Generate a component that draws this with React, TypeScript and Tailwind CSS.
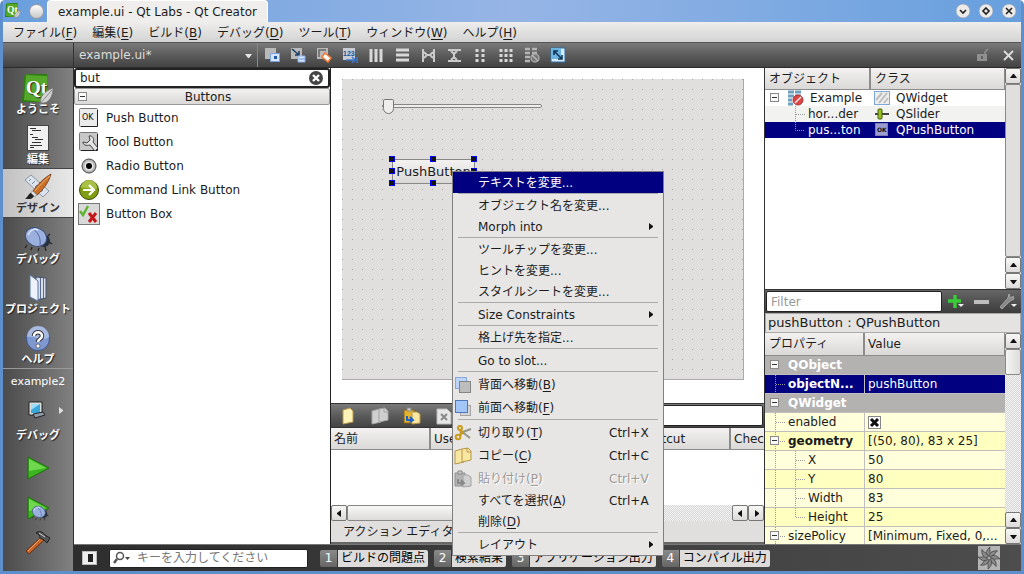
// Qt Creator のデザインモード画面。
// フォームエディタ上でプッシュボタンのコンテキストメニューを開いた状態を描画する。

import React from 'react';

const panelHeader = 'bg-linear-to-b from-[#f3f2f1] to-[#dad9d8]';
const darkBar = 'bg-linear-to-b from-[#7a7a7a] via-[#5c5c5c] to-[#434343]';

interface LabelProps {
  text: string;
  accel?: string;
}

const Label: React.FC<LabelProps> = ({ text, accel }) => (
  <span className="whitespace-nowrap">
    {text}
    {accel && (
      <>
        (<span className="underline underline-offset-2">{accel}</span>)
      </>
    )}
  </span>
);

// ---- アイコン ----

const QtLogo: React.FC<{ className: string }> = ({ className }) => (
  <svg viewBox="0 0 32 32" className={className} aria-hidden="true">
    <path d="M2 3L4 0H25V23L20 28H0Z" fill="#2d7d10" />
    <path d="M4 1L25 2V23L20 28L2 26Z" fill="#55a82a" />
    <text x="4" y="20" fontSize="19" fontWeight="bold" fontFamily="Liberation Serif" fill="#fff">Qt</text>
    <path d="M31 14C23 17 17 23 19 29C27 30 31 22 31 14Z" fill="#d4d4d4" stroke="#777" strokeWidth="0.8" />
    <path d="M30 16L17 31" stroke="#888" fill="none" />
  </svg>
);

const EditIcon = () => (
  <svg viewBox="0 0 32 28" className="h-7 w-8" aria-hidden="true">
    <rect x="5.5" y="1.5" width="21" height="25" fill="#f1f1f1" stroke="#444" />
    <path d="M8 4.5h6M10 6.5h9M8 10.5h3M10 13.5h6M13 15.5h8M10 18.5h9M8 21.5h12M8 23.5h4" stroke="#333" />
  </svg>
);

const DesignIcon = () => (
  <svg viewBox="0 0 32 28" className="h-7 w-8" aria-hidden="true">
    <path d="M3 7L9 2L27 18L21 24Z" fill="#dce3ec" stroke="#8a96a8" />
    <path d="M7 8l2-2M10 11l3-3M13 14l2-2M16 16l3-3M19 19l2-2" stroke="#7a8aa0" />
    <path d="M29 1C22 5 15 12 11 18L15 22C21 17 27 9 29 1Z" fill="#c8702a" stroke="#70340c" strokeWidth="0.8" />
    <path d="M28 3C22 8 17 13 13 18" stroke="#f0b070" fill="none" />
    <path d="M11 18L15 22L12 24L8 20Z" fill="#ddd" stroke="#777" strokeWidth="0.6" />
    <path d="M9 20L12 23C10 27 7 26 3 26C6 24 6 21 9 20Z" fill="#222" />
  </svg>
);

const BugIcon: React.FC<{ className?: string }> = ({ className = 'h-7 w-8' }) => (
  <svg viewBox="0 0 32 28" className={className} aria-hidden="true">
    <path d="M5 21l-2 3M10 23l-1 3M17 24l-1 3M23 23l1 4M27 18l3 2M25 13l3-3" stroke="#222" strokeWidth="1.2" />
    <circle cx="22" cy="17" r="6" fill="#27303c" />
    <ellipse cx="14" cy="13" rx="11" ry="9" transform="rotate(25 14 13)" fill="#9bb0de" stroke="#3d4f7b" />
    <path d="M10 4C16 8 19 14 18 21" stroke="#5067a0" fill="none" />
    <path d="M6 11C8 6 12 4 16 6" stroke="#dce6fb" strokeWidth="1.6" fill="none" />
  </svg>
);

const ProjectIcon = () => (
  <svg viewBox="0 0 32 28" className="h-7 w-8" aria-hidden="true">
    <path d="M14 3L24 4V24L14 26Z" fill="#d8dde6" stroke="#42526c" />
    <path d="M18.5 4v21M21.5 4v20" stroke="#5c6d8c" />
    <path d="M8 1L16 7V27L8 23Z" fill="#eef3fb" stroke="#5b79ab" />
  </svg>
);

const HelpIcon = () => (
  <svg viewBox="0 0 32 28" className="h-7 w-8" aria-hidden="true">
    <circle cx="16" cy="15" r="11.5" fill="#7f98cf" stroke="#3c5692" />
    <path d="M5 13A11 11 0 0 1 27 13C20 18 12 11 5 13Z" fill="#a8bae2" />
    <path d="M12 12C12 7 20 7 20 12C20 15 16 15 16 18" fill="none" stroke="#333" strokeWidth="4.5" />
    <path d="M12 12C12 7 20 7 20 12C20 15 16 15 16 18" fill="none" stroke="#fff" strokeWidth="2.6" />
    <circle cx="16" cy="22" r="2" fill="#fff" stroke="#333" strokeWidth="0.6" />
  </svg>
);

const ComputerIcon = () => (
  <svg viewBox="0 0 18 18" className="h-[18px] w-[18px]" aria-hidden="true">
    <path d="M1 1H14V14H1Z" fill="#ddd" stroke="#222" />
    <path d="M3 3H12V12H3Z" fill="#39a7dc" />
    <path d="M3 3H12L3 9Z" fill="#9fdcf7" />
    <path d="M5 13L15 11L17 14L7 17Z" fill="#8d9ca5" stroke="#222" />
  </svg>
);

const RunIcon = () => (
  <svg viewBox="0 0 24 24" className="h-6 w-6" aria-hidden="true">
    <path d="M2 1L23 12L2 23Z" fill="#3cb521" stroke="#1f6f10" />
    <path d="M3 3L20 12L3 15Z" fill="#6fd84e" />
  </svg>
);

const HammerIcon = () => (
  <svg viewBox="0 0 26 26" className="h-[26px] w-[26px]" aria-hidden="true">
    <path d="M16 8L19 11L4 25L1 22Z" fill="#c9662b" stroke="#6b2f0d" />
    <path d="M16 9L3 22" stroke="#f0a26b" />
    <path d="M11 4C14 1 18 3 20 6L25 9L22 14L19 11L15 9C15 6 14 5 11 4Z" fill="#555" stroke="#222" />
    <path d="M14 4L20 8" stroke="#ccc" />
  </svg>
);

const Triangle: React.FC<{ dir: 'up' | 'down' | 'left' | 'right'; className?: string }> = ({ dir, className = 'text-[#111]' }) => {
  const d = {
    up: 'M1 6L4 2H5L8 6Z',
    down: 'M1 3L4 7H5L8 3Z',
    left: 'M6 1L2 4V5L6 8Z',
    right: 'M3 1L7 4V5L3 8Z',
  }[dir];
  return (
    <svg viewBox="0 0 9 9" className={`h-[9px] w-[9px] shrink-0 ${className}`} aria-hidden="true">
      <path d={d} fill="currentColor" />
    </svg>
  );
};

const FileIcon: React.FC<{ kind: 'new' | 'copy' | 'paste' | 'delete'; disabled?: boolean }> = ({ kind, disabled }) => {
  const fill = disabled ? '#cfcfcf' : '#f8e7a0';
  const edge = disabled ? '#a4a4a4' : '#b8964a';
  return (
    <svg viewBox="0 0 18 18" className="h-[18px] w-[18px] shrink-0" aria-hidden="true">
      {kind === 'new' && <path d="M4 3L11 1L14 4V15L4 17Z" fill="#fdf3b8" stroke={edge} />}
      {kind === 'copy' && (
        <>
          <path d="M1 4L8 2L10 4V15L1 17Z" fill={fill} stroke={edge} />
          <path d="M8 2L14 1L17 4V13L8 15Z" fill={fill} stroke={edge} />
          <path d="M13 1V5H17" fill="none" stroke={edge} />
        </>
      )}
      {kind === 'paste' && (
        <>
          <path d="M1 3H11V16H1Z" fill={disabled ? '#b4b4b4' : '#e3b52e'} stroke={disabled ? '#909090' : '#8a6410'} />
          <path d="M4 1H8V4H4Z" fill="#ccc" stroke="#888" />
          <path d="M9 5H14L17 7V16L9 17Z" fill={fill} stroke={edge} />
          <path d="M4 9V13H9M7 10L10 13L7 15" fill="none" stroke={disabled ? '#888' : '#1e62c8'} strokeWidth="2" />
        </>
      )}
      {kind === 'delete' && (
        <>
          <path d="M2 2H12L16 6V17H2Z" fill="#e6e6e6" stroke="#bbb" />
          <path d="M6 7L12 13M12 7L6 13" stroke="#888" strokeWidth="2" />
        </>
      )}
    </svg>
  );
};

const StackIcon: React.FC<{ front: 'gray' | 'blue' }> = ({ front }) => (
  <svg viewBox="0 0 18 18" className="h-[18px] w-[18px]" aria-hidden="true">
    {front === 'gray' ? (
      <>
        <rect x="1.5" y="1.5" width="11" height="11" fill="#bcd4f8" stroke="#88a8d8" />
        <rect x="5.5" y="5.5" width="11" height="11" fill="#bdbdbd" stroke="#858585" />
      </>
    ) : (
      <>
        <rect x="6.5" y="6.5" width="10" height="10" fill="#d4d4d4" stroke="#a4a4a4" />
        <rect x="1.5" y="1.5" width="12" height="12" fill="#a3c6f8" stroke="#4f78bc" />
      </>
    )}
  </svg>
);

const CutIcon = () => (
  <svg viewBox="0 0 18 18" className="h-[18px] w-[18px]" aria-hidden="true">
    <path d="M6 9L17 5M7 7L16 14" stroke="#959588" strokeWidth="2" />
    <circle cx="6" cy="4" r="2" fill="none" stroke="#c99a1c" strokeWidth="2" />
    <circle cx="4" cy="13" r="2.3" fill="none" stroke="#c99a1c" strokeWidth="2" />
    <path d="M6 6L9 9M6 11L9 8" stroke="#c99a1c" strokeWidth="2.5" />
  </svg>
);

// フォームエディタのツールバー(編集モード切替とレイアウト)
const formTools: { name: string; icon: React.ReactNode }[] = [
  {
    name: 'ウィジェットを編集',
    icon: (
      <>
        <path d="M1 1H12V12H1Z" fill="#b9b9b9" />
        <path d="M6.500 6.500H15.500V14.500H6.500Z" fill="#d4e5ff" stroke="#7ca2dc" />
        <path d="M10 9H13V12H10Z" fill="#2359ab" />
      </>
    ),
  },
  {
    name: 'シグナル/スロットを編集',
    icon: (
      <>
        <path d="M1 1H12V12H1Z" fill="#b9b9b9" />
        <path d="M2 2L9 8M9 4V8H5" stroke="#173a61" strokeWidth="1.5" fill="none" />
        <path d="M8 9H15V15H8Z" fill="#d4e5ff" stroke="#8bafe2" />
        <path d="M9 12H15" stroke="#6b95d0" />
      </>
    ),
  },
  {
    name: 'buddy を編集',
    icon: (
      <>
        <path d="M1 1H12V12H1Z" fill="#b9b9b9" />
        <path d="M3 10V3H10" stroke="#666" strokeWidth="1.5" fill="none" />
        <path d="M9 6L15 11L12 15L6 10Z" fill="#fff" stroke="#ee7a3c" strokeWidth="1.6" />
      </>
    ),
  },
  {
    name: 'タブ順序を編集',
    icon: (
      <>
        <path d="M1 1H13V13H1Z" fill="#c7ccd4" />
        <text x="1" y="9" fontSize="7" fontWeight="bold" fontFamily="Liberation Sans" fill="#244f94">123</text>
        <path d="M4 13H13M10 10L13 13L10 16M15 10V16" stroke="#3f78cf" strokeWidth="1.5" fill="none" />
      </>
    ),
  },
  { name: '水平に並べる', icon: <path d="M3 2V15M8 2V15M13 2V15" stroke="#d8d8d8" strokeWidth="3" /> },
  { name: '垂直に並べる', icon: <path d="M2 3H15M2 8H15M2 13H15" stroke="#d8d8d8" strokeWidth="3" /> },
  {
    name: '水平スプリッタ',
    icon: <path d="M3 2V15M14 2V15M4 5L7 8L4 11M13 5L10 8L13 11M7 8H10" stroke="#c9c9c9" strokeWidth="2" fill="none" />,
  },
  {
    name: '垂直スプリッタ',
    icon: <path d="M2 3H15M2 14H15M5 4L8 7L11 4M5 13L8 10L11 13M8 7V10" stroke="#c9c9c9" strokeWidth="2" fill="none" />,
  },
  { name: 'フォームレイアウト', icon: <path d="M5 2V15M11 2V15" stroke="#d8d8d8" strokeWidth="3" strokeDasharray="3 2" /> },
  {
    name: 'グリッドに並べる',
    icon: <path d="M3 2V15M8 2V15M13 2V15" stroke="#d8d8d8" strokeWidth="3" strokeDasharray="3 2" />,
  },
  {
    name: 'レイアウトを解除',
    icon: (
      <>
        <path d="M1 2H6M8 2H13M1 6H6M8 6H13M1 10H6M1 14H6" stroke="#b5b5b5" strokeWidth="2.5" />
        <circle cx="11" cy="11" r="4" fill="#777" stroke="#a5a5a5" strokeWidth="1.5" />
        <path d="M8 8L14 14" stroke="#b5b5b5" strokeWidth="1.5" />
      </>
    ),
  },
  {
    name: 'サイズを調整',
    icon: (
      <>
        <path d="M1 1H15V15H1Z" fill="#d6ecfa" stroke="#2c6ca5" />
        <path d="M1 1H11V12H1Z" fill="#6bb4df" />
        <path d="M4 4L12 12M4 8V4H8M12 8V12H8" stroke="#0f3557" strokeWidth="1.6" fill="none" />
      </>
    ),
  },
];

// ---- ウィンドウ上部 ----

const TitleBar = () => (
  <header className="flex h-[22px] shrink-0 items-center bg-linear-to-r from-[#6a9fdd] via-[#96b5e6] to-[#679fde] pl-[2px]">
    <QtLogo className="h-4 w-4" />
    <button aria-label="最前面に固定" className="ml-2 h-[15px] w-[15px] rounded-full border border-[#9a9a9a] bg-linear-to-b from-[#fdfdfd] to-[#c9c9c9]" />
    <h1 className="ml-[3px] flex h-full items-center self-end rounded-t-[4px] border-x border-t border-white bg-[#efeeed] px-[10px] pt-px">
      example.ui - Qt Labs - Qt Creator
    </h1>
    <div className="ml-auto flex gap-2 pr-1">
      {[
        { name: '最小化', d: 'M4 6L7 9L10 6' },
        { name: '最大化', d: 'M7 4L10 7L7 10L4 7Z' },
        { name: '閉じる', d: 'M4 4L10 10M10 4L4 10' },
      ].map((b) => (
        <button key={b.name} aria-label={b.name}>
          <svg viewBox="0 0 15 15" className="h-[15px] w-[15px]">
            <circle cx="7" cy="7" r="7" fill="#ecebea" stroke="#8b96a6" strokeWidth="0.6" />
            <path d={b.d} fill="none" stroke="#222" strokeWidth="1.6" />
          </svg>
        </button>
      ))}
    </div>
  </header>
);

const menus: [string, string][] = [
  ['ファイル', 'F'],
  ['編集', 'E'],
  ['ビルド', 'B'],
  ['デバッグ', 'D'],
  ['ツール', 'T'],
  ['ウィンドウ', 'W'],
  ['ヘルプ', 'H'],
];

const MenuBar = () => (
  <nav className="flex h-[21px] shrink-0 items-center gap-[15px] border-b border-[#555] bg-linear-to-b from-[#efeeed] to-[#d3d3d3] pt-px pl-[10px]">
    {menus.map(([text, accel]) => (
      <button key={text}>
        <Label text={text} accel={accel} />
      </button>
    ))}
  </nav>
);

const FormToolBar = () => (
  <div className={`flex h-[25px] shrink-0 items-center border-b border-[#2c2c2c] ${darkBar}`}>
    <div className="h-full w-[71px] border-r border-[#333]" />
    <div className="relative flex h-full w-[184px] items-center border-r border-[#888]">
      <select aria-label="開いているファイル" className="h-full w-full appearance-none bg-transparent pl-[5px] text-[#dcdcdc]">
        <option>example.ui*</option>
      </select>
      <Triangle dir="down" className="pointer-events-none absolute right-1 text-[#e6e6e6]" />
    </div>
    <div className="flex items-center gap-[10px] pl-[6px]">
      {formTools.map((t) => (
        <button key={t.name} aria-label={t.name}>
          <svg viewBox="0 0 16 16" className="h-4 w-4">{t.icon}</svg>
        </button>
      ))}
    </div>
    <div className="ml-auto flex items-center gap-[13px] pr-[7px]">
      <svg viewBox="0 0 13 14" className="h-[14px] w-[13px]" aria-hidden="true">
        <path d="M1 6H11V13H1Z" fill="#909090" />
        <path d="M9 6V4L12 1" stroke="#909090" strokeWidth="1.5" fill="none" />
        <path d="M6 8V11" stroke="#555" strokeWidth="1.5" />
      </svg>
      <button aria-label="エディタを閉じる">
        <svg viewBox="0 0 12 12" className="h-3 w-3">
          <path d="M2 2L11 11M11 2L2 11" stroke="#dedede" strokeWidth="1.8" />
        </svg>
      </button>
    </div>
  </div>
);

// ---- モード選択 ----

const modes = [
  { name: 'ようこそ', icon: <QtLogo className="-mb-1 h-8 w-8 shrink-0" /> },
  { name: '編集', icon: <EditIcon /> },
  { name: 'デザイン', icon: <DesignIcon />, active: true },
  { name: 'デバッグ', icon: <BugIcon /> },
  { name: 'プロジェクト', icon: <ProjectIcon /> },
  { name: 'ヘルプ', icon: <HelpIcon /> },
];

const ModeBar = () => (
  <aside className="flex w-[71px] shrink-0 flex-col border-r border-[#2f2f2f] bg-linear-to-r from-[#4b4b4b] to-[#818181]">
    {modes.map((m) => (
      <button
        key={m.name}
        className={`flex h-[50px] shrink-0 flex-col items-center justify-end text-[11px] leading-[16px] font-bold ${
          m.active
            ? 'border-y border-[#444] bg-linear-to-r from-[#c0c0c0] to-[#e9e9e9] text-[#333]'
            : 'text-white [text-shadow:1px_1px_1px_#222]'
        }`}
      >
        {m.icon}
        <span className="whitespace-nowrap">{m.name}</span>
      </button>
    ))}
    <div className="flex flex-1 flex-col items-center border-t border-[#999] pt-[5px] text-[11px] leading-[16px] text-white">
      <span>example2</span>
      <button aria-label="キットを選択" className="mt-[11px] flex items-center gap-[10px] pl-[17px]">
        <ComputerIcon />
        <Triangle dir="right" className="text-[#e0e0e0]" />
      </button>
      <span className="mt-[9px] font-bold [text-shadow:1px_1px_1px_#222]">デバッグ</span>
      <button aria-label="実行" className="mt-3">
        <RunIcon />
      </button>
      <button aria-label="デバッグ開始" className="relative mt-4">
        <RunIcon />
        <BugIcon className="absolute top-2 left-1 h-[17px] w-5" />
      </button>
      <button aria-label="ビルド" className="mt-[9px]">
        <HammerIcon />
      </button>
    </div>
  </aside>
);

// ---- ウィジェットボックス ----

const widgets: { name: string; icon: React.ReactNode }[] = [
  {
    name: 'Push Button',
    icon: (
      <>
        <rect x="1.5" y="1.5" width="18" height="18" rx="1" fill="#ebebeb" stroke="#777" />
        <path d="M19.500 3V19.500H3" fill="none" stroke="#222" />
        <text x="4" y="13" fontSize="8" fontFamily="DejaVu Sans" fill="#111">OK</text>
      </>
    ),
  },
  {
    name: 'Tool Button',
    icon: (
      <>
        <rect x="1.5" y="1.5" width="18" height="18" rx="1" fill="#c8c8c8" stroke="#777" />
        <path d="M19.500 3V19.500H3" fill="none" stroke="#222" />
        <path d="M11 5C14 4 17 8 15 11L20 17L17 20L12 14C8 15 5 14 5 11L9 12L12 9Z" fill="#e4e4e4" stroke="#444" />
      </>
    ),
  },
  {
    name: 'Radio Button',
    icon: (
      <>
        <circle cx="11" cy="11" r="7" fill="#b9b9b9" stroke="#444" />
        <circle cx="11" cy="11" r="4.5" fill="#e8e8e8" />
        <circle cx="11" cy="11" r="3" fill="#000" />
      </>
    ),
  },
  {
    name: 'Command Link Button',
    icon: (
      <>
        <circle cx="11" cy="11" r="9.5" fill="#809c10" stroke="#3f4a10" />
        <path d="M3 9A8 8 0 0 1 19 9C14 12 8 8 3 9Z" fill="#a8c044" />
        <path d="M5 11H15M11 6L16 11L11 16" fill="none" stroke="#fff" strokeWidth="2.2" />
      </>
    ),
  },
  {
    name: 'Button Box',
    icon: (
      <>
        <rect x="0.5" y="0.5" width="21" height="21" fill="#d9d9d9" stroke="#777" />
        <path d="M2 8L5 12L10 3" fill="none" stroke="#5cb52c" strokeWidth="2.4" />
        <path d="M11 10L18 19M18 10L11 19" stroke="#c41818" strokeWidth="3" />
      </>
    ),
  },
];

const WidgetBox = () => (
  <section className="flex w-[257px] shrink-0 flex-col border-r border-[#222] bg-white">
    <div className="relative flex h-5 shrink-0 items-center rounded-[3px] border-2 border-[#222] bg-white">
      <input aria-label="ウィジェットを検索" defaultValue="but" className="w-full bg-transparent pl-1 outline-none" />
      <button aria-label="検索文字列を消去" className="absolute right-1">
        <svg viewBox="0 0 15 15" className="h-[15px] w-[15px]">
          <circle cx="7" cy="7" r="7" fill="#444" />
          <path d="M4 4L10 10M10 4L4 10" stroke="#fff" strokeWidth="2.4" />
        </svg>
      </button>
    </div>
    <button className={`relative flex h-[17px] shrink-0 items-center justify-center rounded-[2px] border border-[#999] pl-3 ${panelHeader}`}>
      <span className="absolute left-[3px] flex h-[9px] w-[9px] items-center justify-center border border-[#888] bg-white">
        <span className="h-px w-[5px] bg-[#333]" />
      </span>
      Buttons
    </button>
    <ul className="pt-px">
      {widgets.map((w) => (
        <li key={w.name} className="flex h-6 items-center gap-[6px] pl-1">
          <svg viewBox="0 0 22 22" className="h-[22px] w-[22px] shrink-0" aria-hidden="true">{w.icon}</svg>
          {w.name}
        </li>
      ))}
    </ul>
  </section>
);

// ---- スクロールバー ----

const arrowButton = 'flex h-4 w-4 shrink-0 items-center justify-center rounded-[2px] border border-[#777] bg-linear-to-b from-[#f7f7f6] to-[#dcdbda]';
const hatch = 'bg-[repeating-conic-gradient(#d6d6d6_0_25%,#f4f4f4_0_50%)] bg-size-[2px_2px]';

const VScroll: React.FC<{ thumb: string }> = ({ thumb }) => (
  <div className={`flex w-4 shrink-0 flex-col ${hatch}`}>
    <button aria-label="上へ" className={arrowButton}><Triangle dir="up" /></button>
    <div className={`rounded-[2px] border border-[#888] ${thumb}`} />
    <button aria-label="上へ" className={`mt-auto ${arrowButton}`}><Triangle dir="up" /></button>
    <button aria-label="下へ" className={arrowButton}><Triangle dir="down" /></button>
  </div>
);

// ---- フォームエディタ ----

const handles = [
  '-left-[3px] -top-[3px]',
  'left-[38px] -top-[3px]',
  '-right-[2px] -top-[3px]',
  '-left-[3px] top-[9px]',
  '-right-[2px] top-[9px]',
  '-left-[3px] -bottom-[2px]',
  'left-[38px] -bottom-[2px]',
  '-right-[2px] -bottom-[2px]',
];

const FormCanvas = () => (
  <div className="min-h-0 flex-1 overflow-hidden bg-white p-[11px]">
    <div className="relative h-[301px] w-[402px] border-r border-b border-[#aaa] bg-[#e0dfde] bg-[linear-gradient(90deg,#e0dfde_9px,transparent_9px),linear-gradient(#e0dfde_9px,#a5a5a5_9px)] bg-size-[10px_10px] bg-position-[1px_1px]">
      <input
        type="range"
        aria-label="horizontalSlider"
        defaultValue={0}
        className="absolute top-[19px] left-10 h-4 w-40 appearance-none bg-transparent [&::-webkit-slider-runnable-track]:h-1 [&::-webkit-slider-runnable-track]:rounded-full [&::-webkit-slider-runnable-track]:border [&::-webkit-slider-runnable-track]:border-[#858585] [&::-webkit-slider-runnable-track]:bg-[#efeeed] [&::-webkit-slider-thumb]:-mt-[6px] [&::-webkit-slider-thumb]:h-[15px] [&::-webkit-slider-thumb]:w-[11px] [&::-webkit-slider-thumb]:appearance-none [&::-webkit-slider-thumb]:rounded-t-[2px] [&::-webkit-slider-thumb]:rounded-b-[6px] [&::-webkit-slider-thumb]:border [&::-webkit-slider-thumb]:border-[#777] [&::-webkit-slider-thumb]:bg-[#eeedec]"
      />
      <div className="absolute top-20 left-[50px] h-[25px] w-[83px]">
        <button className={`h-full w-full border border-[#888] text-[13px] whitespace-nowrap ${panelHeader}`}>PushButton</button>
        {handles.map((pos) => (
          <span key={pos} className={`absolute h-[6px] w-[6px] border border-[#0000f0] bg-[#111] ${pos}`} />
        ))}
      </div>
    </div>
  </div>
);

const actionColumns = ['名前', 'Used', 'テキスト', 'Shortcut', 'Checkable'];

const ActionEditor = () => (
  <section className="flex shrink-0 flex-col bg-[#e0dfde]">
    <div className={`flex h-[25px] items-center gap-[14px] border-y border-[#333] pr-px pl-2 ${darkBar}`}>
      <button aria-label="新規"><FileIcon kind="new" /></button>
      <button aria-label="コピー"><FileIcon kind="copy" disabled /></button>
      <button aria-label="貼り付け"><FileIcon kind="paste" /></button>
      <button aria-label="削除"><FileIcon kind="delete" /></button>
      <input aria-label="アクションを絞り込む" className="ml-6 h-[21px] min-w-0 flex-1 rounded-[2px] border border-[#222] bg-white px-1" />
    </div>
    <div className="h-[77px] overflow-hidden bg-white">
      <table className="w-[500px] table-fixed border-separate border-spacing-0">
        <thead>
          <tr>
            {actionColumns.map((c) => (
              <th key={c} className={`h-[22px] w-[100px] border-r-2 border-b border-[#8c8c8c] p-0 pl-[3px] text-left font-normal ${panelHeader}`}>
                <Label text={c} />
              </th>
            ))}
          </tr>
        </thead>
      </table>
    </div>
    <div className={`flex h-4 ${hatch}`}>
      <button aria-label="左へ" className={arrowButton}><Triangle dir="left" /></button>
      <div className="w-[310px] rounded-[2px] border border-[#888] bg-linear-to-b from-[#f8f8f7] to-[#dcdbda]" />
      <button aria-label="左へ" className={`ml-auto ${arrowButton}`}><Triangle dir="left" /></button>
      <button aria-label="右へ" className={arrowButton}><Triangle dir="right" /></button>
    </div>
    <button className="flex h-[23px] items-center border-b-2 border-[#666] pt-px pl-3 text-left">
      <Label text="アクション エディタ" />
    </button>
  </section>
);

// ---- 右側のドック ----

type Branch = 'root' | 'leaf' | 'open' | 'sub' | 'subLast';

/** ツリーの点線と開閉ボックス */
const TreeLines: React.FC<{ kind: Branch }> = ({ kind }) => {
  const dots = { stroke: '#999', strokeDasharray: '1 1' };
  const nested = kind === 'sub' || kind === 'subLast';
  return (
    <svg viewBox="0 0 42 18" className={`h-[18px] shrink-0 ${nested ? 'w-[42px]' : 'w-[42px] -mr-5'}`} aria-hidden="true">
      {kind !== 'root' && <path d="M10.500 0V18" {...dots} />}
      {kind === 'leaf' && <path d="M11 9.500H20" {...dots} />}
      {nested && <path d={kind === 'sub' ? 'M30.500 0V18M31 9.500H40' : 'M30.500 0V9.500H40'} fill="none" {...dots} />}
      {(kind === 'open' || kind === 'root') && (
        <>
          {kind === 'open' && <path d="M15 9.500H20" {...dots} />}
          <rect x="5.5" y="4.5" width="8" height="8" fill="#f8f8f8" stroke="#888" />
          <path d="M7 8.500H12" stroke="#333" />
        </>
      )}
    </svg>
  );
};

const ExampleIcon = () => (
  <svg viewBox="0 0 17 16" className="h-4 w-[17px] shrink-0" aria-hidden="true">
    <path d="M1 2H7M8 2H14M1 6H7M8 6H14M1 10H5M1 14H6" stroke="#6f9fbe" strokeWidth="3" />
    <circle cx="11" cy="10" r="5" fill="#d44" stroke="#a33" />
    <path d="M8 13L14 7" stroke="#eee" strokeWidth="1.5" />
  </svg>
);

const objects = [
  {
    name: 'Example',
    cls: 'QWidget',
    icon: (
      <>
        <rect x="0.5" y="1.5" width="15" height="13" fill="#eee" stroke="#7da7d9" />
        <path d="M2 10L8 3M5 13L13 3M10 13L14 8" stroke="#bdbdbd" strokeWidth="2" />
      </>
    ),
  },
  {
    name: 'hor...der',
    cls: 'QSlider',
    icon: (
      <>
        <path d="M1 8H15" stroke="#444" strokeWidth="2" />
        <rect x="4" y="3" width="4" height="10" rx="1" fill="#96c31f" stroke="#455d0b" />
      </>
    ),
  },
  {
    name: 'pus...ton',
    cls: 'QPushButton',
    icon: (
      <>
        <rect x="1.5" y="1.5" width="12" height="12" fill="#9c9cd0" stroke="#7d7db8" />
        <text x="3" y="10" fontSize="6" fontWeight="bold" fontFamily="DejaVu Sans" fill="#112">OK</text>
      </>
    ),
  },
];

const ObjectInspector = () => (
  <section className="flex min-h-0 flex-1 border-b border-[#333] bg-white">
    <div className="min-w-0 flex-1">
      <table className="w-full table-fixed border-separate border-spacing-0">
        <thead>
          <tr>
            <th className={`h-[22px] w-[106px] border-r-2 border-b border-[#8c8c8c] p-0 pl-1 text-left font-normal ${panelHeader}`}>
              <Label text="オブジェクト" />
            </th>
            <th className={`border-r border-b border-[#8c8c8c] p-0 pl-1 text-left font-normal ${panelHeader}`}>
              <Label text="クラス" />
            </th>
          </tr>
        </thead>
        <tbody>
          {objects.map((o, i) => (
            <tr key={o.name} className={i === 2 ? 'bg-[#000080] text-white' : i === 1 ? 'bg-[#f2f2f0]' : ''}>
              <td className="p-0">
                <div className="flex h-4 items-center overflow-hidden">
                  {i === 0 ? (
                    <>
                      <TreeLines kind="root" />
                      <ExampleIcon />
                      <span className="ml-[6px]">{o.name}</span>
                    </>
                  ) : (
                    <>
                      <svg viewBox="0 0 43 16" className="h-4 w-[43px] shrink-0" aria-hidden="true">
                        <path d={i === 1 ? 'M30.500 0V16M31 8.500H40' : 'M30.500 0V8.500H40'} fill="none" stroke="#999" strokeDasharray="1 1" />
                      </svg>
                      {o.name}
                    </>
                  )}
                </div>
              </td>
              <td className="p-0">
                <div className="flex h-4 items-center gap-[6px] pl-[3px]">
                  <svg viewBox="0 0 16 16" className="h-4 w-4 shrink-0" aria-hidden="true">{o.icon}</svg>
                  {o.cls}
                </div>
              </td>
            </tr>
          ))}
        </tbody>
      </table>
    </div>
    <VScroll thumb="flex-1 bg-[#e0dfde]" />
  </section>
);

interface Property {
  name: string;
  value?: React.ReactNode;
  kind: Branch;
  tone: string;
}

const properties: Property[] = [
  { name: 'QObject', kind: 'root', tone: 'bg-[#b3b2b1] font-bold text-white' },
  { name: 'objectN...', value: 'pushButton', kind: 'leaf', tone: 'bg-[#000080] text-white' },
  { name: 'QWidget', kind: 'root', tone: 'bg-[#b3b2b1] font-bold text-white' },
  {
    name: 'enabled',
    value: (
      <span className="relative flex h-[13px] w-[13px]">
        <input
          type="checkbox"
          id="prop-enabled"
          defaultChecked
          className="peer h-[13px] w-[13px] appearance-none border border-[#888] bg-white"
        />
        <svg viewBox="0 0 13 13" className="pointer-events-none absolute inset-0 hidden h-[13px] w-[13px] peer-checked:block">
          <path d="M3 3L10 10M10 3L3 10" stroke="#111" strokeWidth="3" />
        </svg>
      </span>
    ),
    kind: 'leaf',
    tone: 'bg-[#ffffdc]',
  },
  { name: 'geometry', value: '[(50, 80), 83 x 25]', kind: 'open', tone: 'bg-[#ffffbf]' },
  { name: 'X', value: '50', kind: 'sub', tone: 'bg-[#ffffdc]' },
  { name: 'Y', value: '80', kind: 'sub', tone: 'bg-[#ffffbf]' },
  { name: 'Width', value: '83', kind: 'sub', tone: 'bg-[#ffffdc]' },
  { name: 'Height', value: '25', kind: 'subLast', tone: 'bg-[#ffffbf]' },
  { name: 'sizePolicy', value: '[Minimum, Fixed, 0,...', kind: 'open', tone: 'bg-[#ffffdc]' },
];

const PropertyEditor = () => (
  <section className="flex shrink-0 flex-col">
    <div className="flex h-[23px] items-center bg-linear-to-b from-[#666] to-[#3c3c3c] pr-1 pl-px">
      <input
        aria-label="プロパティを絞り込む"
        placeholder="Filter"
        className="h-[21px] w-[176px] rounded-[2px] border border-[#222] bg-white pl-1 placeholder:text-[#999]"
      />
      <div className="ml-auto flex items-center gap-[9px]">
        <button aria-label="動的プロパティを追加">
          <svg viewBox="0 0 18 18" className="h-[18px] w-[18px]">
            <path d="M1 8H14M8 2V15" stroke="#38cc38" strokeWidth="3.4" />
            <path d="M11 11H17L14 14Z" fill="#eee" />
          </svg>
        </button>
        <button aria-label="動的プロパティを削除">
          <svg viewBox="0 0 16 18" className="h-[18px] w-4">
            <path d="M0 9H15" stroke="#bdbdbd" strokeWidth="4" />
          </svg>
        </button>
        <button aria-label="表示設定">
          <svg viewBox="0 0 18 18" className="h-[18px] w-[18px]">
            <path d="M10 1L9 5L1 14L3 16L11 8L15 6L14 3L12 5L11 4Z" fill="#888" stroke="#b4b4b4" strokeWidth="0.8" />
            <path d="M12 11H18L15 14Z" fill="#eee" />
          </svg>
        </button>
      </div>
    </div>
    <p className="flex h-5 items-center border border-[#aaa] bg-[#e4e3e2] pl-[2px] text-[13px]">pushButton : QPushButton</p>
    <div className="flex h-[211px] overflow-hidden bg-white">
      <div className="min-w-0 flex-1 overflow-hidden">
        <table className="w-full table-fixed border-separate border-spacing-0">
          <thead>
            <tr>
              <th className={`h-[23px] w-[100px] border-r-2 border-b border-[#8c8c8c] p-0 pl-1 text-left font-normal ${panelHeader}`}>
                <Label text="プロパティ" />
              </th>
              <th className={`border-r border-b border-[#8c8c8c] p-0 pl-[3px] text-left font-normal ${panelHeader}`}>Value</th>
            </tr>
          </thead>
          <tbody>
            {properties.map((p) => {
              const bold = p.name === 'geometry' || p.name === 'objectN...';
              return (
                <tr key={p.name} className={p.tone}>
                  <td className={`border-b border-[#c0bfbe] p-0 ${p.value ? 'border-r' : ''}`}>
                    <div className="flex h-[18px] items-center whitespace-nowrap">
                      <TreeLines kind={p.kind} />
                      {p.name === 'enabled' ? (
                        <label htmlFor="prop-enabled" className="pl-px">{p.name}</label>
                      ) : (
                        <span className={bold ? 'pl-px font-bold' : 'pl-px'}>{p.name}</span>
                      )}
                    </div>
                  </td>
                  <td className="border-b border-[#c0bfbe] p-0">
                    <div className="flex h-[18px] items-center pl-[3px] whitespace-nowrap">{p.value}</div>
                  </td>
                </tr>
              );
            })}
          </tbody>
        </table>
      </div>
      <VScroll thumb="h-[26px] bg-linear-to-r from-[#f5f5f4] to-[#dddcdb]" />
    </div>
  </section>
);

// ---- ステータスバー ----

const outputPanes = ['ビルドの問題点', '検索結果', 'アプリケーション出力', 'コンパイル出力'];

const StatusBar = () => (
  <footer className="flex h-[27px] shrink-0 items-center border-t border-[#777] bg-linear-to-r from-[#2e2e2e] to-[#4d4d4d] pl-2">
    <button aria-label="サイドバーを隠す" className="flex h-[14px] w-[15px] items-center justify-center border border-[#bbb] bg-[#eee]">
      <span className="ml-[2px] h-2 w-[5px] bg-[#222]" />
    </button>
    <div className="relative ml-3 flex items-center">
      <svg viewBox="0 0 18 14" className="pointer-events-none absolute left-1 h-[14px] w-[18px]" aria-hidden="true">
        <circle cx="7" cy="5" r="3.5" fill="none" stroke="#555" strokeWidth="1.5" />
        <path d="M4 8L1 12" stroke="#555" strokeWidth="2.5" />
        <path d="M12 6H17L14.500 9Z" fill="#444" />
      </svg>
      <input
        aria-label="クイックアクセス"
        placeholder="キーを入力してください"
        className="h-[19px] w-[199px] rounded-[2px] border border-[#222] bg-white pl-[27px] placeholder:text-[#777]"
      />
    </div>
    <div className="ml-3 flex gap-[6px]">
      {outputPanes.map((name, i) => (
        <button key={name} className="flex h-[17px] items-center gap-px whitespace-nowrap">
          <span className="flex h-full w-[17px] items-center justify-center rounded-l-[2px] bg-linear-to-b from-[#8a8a8a] to-[#666] text-white">{i + 1}</span>
          <span className="flex h-full items-center rounded-r-[2px] bg-[#dddcdb] px-[3px] text-black">{name}</span>
        </button>
      ))}
    </div>
    <svg viewBox="0 0 24 24" className="mr-5 ml-auto h-6 w-6" aria-hidden="true">
      <rect x="1" width="22" height="24" fill="#b4b4b4" />
      {[0, 45, 90, 135, 180, 225, 270, 315].map((deg) => (
        <path key={deg} d="M12 12C8 9 9 4 13 1C12 5 15 8 12 12Z" fill="#888" stroke="#444" strokeWidth="0.8" transform={`rotate(${deg} 12 12)`} />
      ))}
      <circle cx="12" cy="12" r="2" fill="#aaa" stroke="#555" />
    </svg>
  </footer>
);

// ---- コンテキストメニュー ----

interface MenuItem {
  text: string;
  accel?: string;
  shortcut?: string;
  icon?: React.ReactNode;
  submenu?: boolean;
  selected?: boolean;
  disabled?: boolean;
  tall?: boolean;
}

const menuGroups: MenuItem[][] = [
  [{ text: 'テキストを変更...', selected: true }],
  [{ text: 'オブジェクト名を変更...' }, { text: 'Morph into', submenu: true }],
  [{ text: 'ツールチップを変更...' }, { text: 'ヒントを変更...' }, { text: 'スタイルシートを変更...' }],
  [{ text: 'Size Constraints', submenu: true }],
  [{ text: '格上げ先を指定...' }],
  [{ text: 'Go to slot...' }],
  [
    { text: '背面へ移動', accel: 'B', icon: <StackIcon front="gray" />, tall: true },
    { text: '前面へ移動', accel: 'F', icon: <StackIcon front="blue" />, tall: true },
  ],
  [
    { text: '切り取り', accel: 'T', shortcut: 'Ctrl+X', icon: <CutIcon />, tall: true },
    { text: 'コピー', accel: 'C', shortcut: 'Ctrl+C', icon: <FileIcon kind="copy" />, tall: true },
    { text: '貼り付け', accel: 'P', shortcut: 'Ctrl+V', icon: <FileIcon kind="paste" disabled />, tall: true, disabled: true },
    { text: 'すべてを選択', accel: 'A', shortcut: 'Ctrl+A' },
    { text: '削除', accel: 'D' },
  ],
  [{ text: 'レイアウト', submenu: true }],
];

const ContextMenu = () => (
  <div role="menu" className="absolute top-[171px] left-[449px] z-10 w-[212px] border border-[#808080] bg-[#e7e6e5]">
    {menuGroups.map((group, gi) => (
      <div key={gi}>
        {gi > 0 && <div className="mx-[5px] h-[2px] border-t border-[#aaa]" />}
        {group.map((item) => (
          <button
            key={item.text}
            role="menuitem"
            disabled={item.disabled}
            className={`flex w-full items-center pr-2 text-left ${item.tall ? 'h-[23px]' : 'h-[21px]'} ${
              item.selected ? 'bg-[#000080] text-white' : item.disabled ? 'text-[#999] [text-shadow:1px_1px_0_#fff]' : ''
            }`}
          >
            <span className="w-[25px] shrink-0 pl-px">{item.icon}</span>
            <Label text={item.text} accel={item.accel} />
            {item.shortcut && <span className="ml-auto w-[46px]">{item.shortcut}</span>}
            {item.submenu && <Triangle dir="right" className="ml-auto text-[#111]" />}
          </button>
        ))}
      </div>
    ))}
  </div>
);

const App: React.FC = () => (
  <div className="relative flex h-screen flex-col overflow-hidden rounded-t-[5px] border-x-3 border-b-3 border-[#5d8fcd] bg-[#e0dfde] font-['DejaVu_Sans','Noto_Sans_CJK_JP',sans-serif] text-[12px] leading-[16px] text-[#1c1c1c]">
    <TitleBar />
    <MenuBar />
    <FormToolBar />
    <div className="flex min-h-0 flex-1">
      <ModeBar />
      <div className="flex min-w-0 flex-1 flex-col">
        <div className="flex min-h-0 flex-1">
          <WidgetBox />
          <main className="flex min-w-0 flex-1 flex-col border-r border-[#333]">
            <FormCanvas />
            <ActionEditor />
          </main>
          <div className="flex w-[256px] shrink-0 flex-col">
            <ObjectInspector />
            <PropertyEditor />
          </div>
        </div>
        <StatusBar />
      </div>
    </div>
    <ContextMenu />
  </div>
);

export default App;
